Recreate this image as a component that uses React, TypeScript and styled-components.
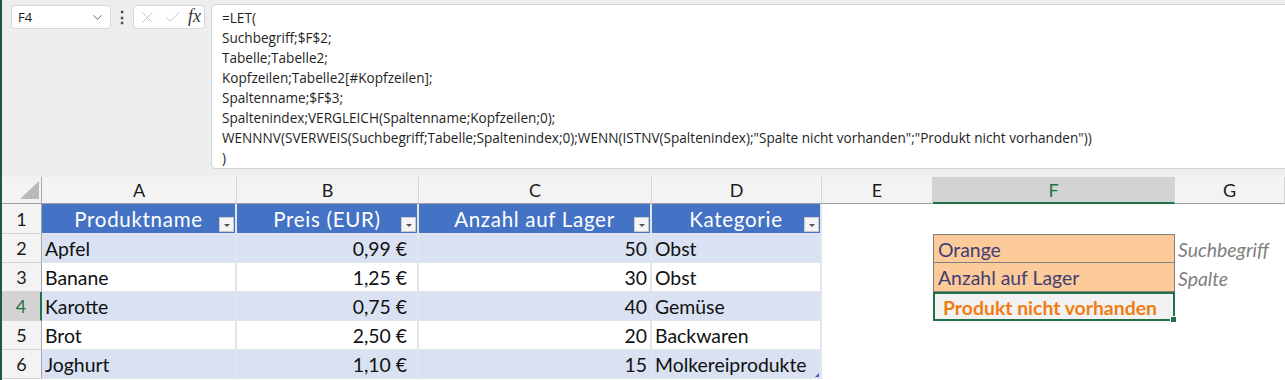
import React from "react";
import styled, { createGlobalStyle } from "styled-components";
import { ChevronDown, X, Check } from "lucide-react";

const GlobalStyle = createGlobalStyle`
  html, body {
    margin: 0;
    padding: 0;
    background: #fff;
    overflow: hidden;
  }
  body {
    font-family: "Lato", "Liberation Sans", sans-serif;
  }
`;

const formula = [
  "=LET(",
  "Suchbegriff;$F$2;",
  "Tabelle;Tabelle2;",
  "Kopfzeilen;Tabelle2[#Kopfzeilen];",
  "Spaltenname;$F$3;",
  "Spaltenindex;VERGLEICH(Spaltenname;Kopfzeilen;0);",
  'WENNNV(SVERWEIS(Suchbegriff;Tabelle;Spaltenindex;0);WENN(ISTNV(Spaltenindex);"Spalte nicht vorhanden";"Produkt nicht vorhanden"))',
  ")",
];

const columns = ["A", "B", "C", "D", "E", "F", "G"];

const products = [
  { name: "Apfel", price: "0,99 €", stock: 50, cat: "Obst" },
  { name: "Banane", price: "1,25 €", stock: 30, cat: "Obst" },
  { name: "Karotte", price: "0,75 €", stock: 40, cat: "Gemüse" },
  { name: "Brot", price: "2,50 €", stock: 20, cat: "Backwaren" },
  { name: "Joghurt", price: "1,10 €", stock: 15, cat: "Molkereiprodukte" },
];

const headers = ["Produktname", "Preis (EUR)", "Anzahl auf Lager", "Kategorie"];

export default function App() {
  return (
    <>
      <GlobalStyle />
      <Window>
        <FormulaBar>
          <NameBox>
            <span>F4</span>
            <ChevronDown size={15} strokeWidth={1.4} color="#555" />
          </NameBox>
          <Dots>⋮</Dots>
          <FnBox>
            <X size={19} strokeWidth={1} color="#b8b8b8" />
            <Check size={19} strokeWidth={1} color="#b8b8b8" />
            <Fx>fx</Fx>
          </FnBox>
          <FormulaBox>
            {formula.map((line, i) => (
              <FormulaLine key={i}>{line}</FormulaLine>
            ))}
          </FormulaBox>
        </FormulaBar>

        <Sheet>
          <Corner>
            <svg width="22" height="20" viewBox="0 0 22 20">
              <polygon points="21,1 21,19 2,19" fill="#b9b9b9" />
            </svg>
          </Corner>
          {columns.map((c) => (
            <ColHead key={c} $active={c === "F"}>
              {c}
            </ColHead>
          ))}

          <RowHead>1</RowHead>
          {headers.map((h) => (
            <TableHead key={h}>
              {h}
              <FilterButton />
            </TableHead>
          ))}
          <Blank />
          <Blank />
          <Blank />

          {products.map((p, i) => {
            const row = i + 2;
            const band = i % 2 === 0;
            const last = i === products.length - 1;
            return (
              <React.Fragment key={p.name}>
                <RowHead $active={row === 4}>{row}</RowHead>
                <DataCell $band={band}>{p.name}</DataCell>
                <DataCell $band={band} $align="right" $padRight={10}>
                  {p.price}
                </DataCell>
                <DataCell $band={band} $align="right">
                  {p.stock}
                </DataCell>
                <DataCell $band={band}>
                  {p.cat}
                  {last && <ResizeMark />}
                </DataCell>
                <Blank />
                {row === 2 && <InputCell>Orange</InputCell>}
                {row === 3 && <InputCell $joined>Anzahl auf Lager</InputCell>}
                {row === 4 && (
                  <CalcCell>
                    Produkt nicht vorhanden
                    <FillHandle />
                  </CalcCell>
                )}
                {row > 4 && <Blank />}
                {row === 2 && <NoteCell>Suchbegriff</NoteCell>}
                {row === 3 && <NoteCell>Spalte</NoteCell>}
                {row > 3 && <Blank />}
              </React.Fragment>
            );
          })}
        </Sheet>
      </Window>
    </>
  );
}

const Window = styled.div`
  width: 1285px;
  height: 380px;
  box-sizing: border-box;
  border-left: 2px solid #1d5b38;
  display: flex;
  flex-direction: column;
  overflow: hidden;
  background: #fff;
`;

const FormulaBar = styled.div`
  height: 177px;
  flex: none;
  box-sizing: border-box;
  background: #eeeeee;
  display: flex;
  align-items: flex-start;
  padding: 4px 0 0 9px;
  font-family: "Open Sans", "Noto Sans", sans-serif;
  color: #222;
`;

const NameBox = styled.div`
  margin-top: 1px;
  width: 100px;
  height: 24px;
  box-sizing: border-box;
  background: #fff;
  border: 1px solid #d7d7d7;
  border-radius: 4px;
  display: flex;
  align-items: center;
  justify-content: space-between;
  padding: 0 5px 0 6px;
  font-size: 13px;
`;

const Dots = styled.div`
  width: 22px;
  height: 26px;
  display: flex;
  align-items: center;
  justify-content: center;
  font-size: 16px;
  font-weight: 700;
  color: #444;
`;

const FnBox = styled.div`
  margin-top: 1px;
  width: 72px;
  height: 24px;
  box-sizing: border-box;
  background: #fff;
  border: 1px solid #d7d7d7;
  border-radius: 4px;
  display: flex;
  align-items: center;
  justify-content: space-between;
  padding: 0 3px 0 4px;
`;

const Fx = styled.span`
  font-family: "Liberation Serif", "DejaVu Serif", serif;
  font-style: italic;
  font-size: 18px;
  line-height: 1;
  color: #333;
  margin-bottom: 2px;
`;

const FormulaBox = styled.div`
  margin-left: 6px;
  margin-right: -12px;
  flex: 1;
  height: 165px;
  box-sizing: border-box;
  background: #fff;
  border: 1px solid #d4d4d4;
  border-radius: 4px 0 0 4px;
  padding: 3px 10px;
`;

const FormulaLine = styled.div`
  font-size: 13.6px;
  line-height: 20px;
  height: 20px;
  white-space: pre;
  color: #1f1f1f;
`;

const Sheet = styled.div`
  display: grid;
  grid-template-columns: 40px 195px 182px 233px 170px 111px 242px 110px;
  grid-template-rows: 27px 30px repeat(5, 29px);
  font-size: 19.4px;
  color: #111;
`;

const HeadBase = styled.div`
  box-sizing: border-box;
  display: flex;
  align-items: center;
  justify-content: center;
  font-size: 18px;
`;

const Corner = styled(HeadBase)`
  background: #f3f3f3;
  border-right: 1px solid #a8a8a8;
  border-bottom: 1px solid #9e9e9e;
  justify-content: flex-end;
  align-items: flex-end;
  padding: 0 1px 3px 0;
`;

const ColHead = styled(HeadBase)<{ $active?: boolean }>`
  background: ${(p) => (p.$active ? "#d3d3d3" : "#f3f3f3")};
  color: ${(p) => (p.$active ? "#217346" : "#1c1c1c")};
  border-right: 1px solid #d4d4d4;
  border-bottom: ${(p) => (p.$active ? "2px solid #217346" : "1px solid #9e9e9e")};
`;

const RowHead = styled(HeadBase)<{ $active?: boolean }>`
  background: ${(p) => (p.$active ? "#d3d3d3" : "#f3f3f3")};
  color: ${(p) => (p.$active ? "#217346" : "#1c1c1c")};
  border-right: ${(p) => (p.$active ? "2px solid #217346" : "1px solid #a8a8a8")};
  border-bottom: 1px solid #d4d4d4;
`;

const TableHead = styled.div`
  position: relative;
  box-sizing: border-box;
  background: #4472c4;
  color: #fff;
  font-size: 20.5px;
  letter-spacing: 0.7px;
  display: flex;
  align-items: center;
  justify-content: center;
  border-right: 2px solid #e2e5ec;
  border-bottom: 1px solid #e2e5ec;
  padding-top: 1px;
`;

const FilterButton = styled.span`
  position: absolute;
  right: 1px;
  bottom: 1px;
  width: 15px;
  height: 15px;
  box-sizing: border-box;
  background: #f4f4f4;
  border: 1px solid #c9c9c9;

  &::after {
    content: "";
    position: absolute;
    left: 4px;
    top: 6px;
    border-left: 3px solid transparent;
    border-right: 3px solid transparent;
    border-top: 3px solid #555;
  }
`;

const DataCell = styled.div<{ $band?: boolean; $align?: "left" | "right"; $padRight?: number }>`
  position: relative;
  box-sizing: border-box;
  background: ${(p) => (p.$band ? "#d9e1f2" : "#fff")};
  display: flex;
  align-items: center;
  justify-content: ${(p) => (p.$align === "right" ? "flex-end" : "flex-start")};
  padding: 1px ${(p) => p.$padRight ?? 3}px 0 3px;
  border-right: 2px solid #e2e5ec;
  border-bottom: 1px solid #e2e5ec;
  white-space: nowrap;
`;

const ResizeMark = styled.span`
  position: absolute;
  right: 1px;
  bottom: 1px;
  width: 0;
  height: 0;
  border-left: 4px solid transparent;
  border-bottom: 4px solid #3b64b0;
`;

const Blank = styled.div`
  background: #fff;
`;

const InputCell = styled.div<{ $joined?: boolean }>`
  box-sizing: border-box;
  background: #fdca99;
  color: #3f3f76;
  border: 1px solid #7f7f7f;
  border-top-width: ${(p) => (p.$joined ? 0 : 1)}px;
  display: flex;
  align-items: center;
  padding: 1px 4px 0 4px;
  white-space: nowrap;
`;

const CalcCell = styled.div`
  position: relative;
  box-sizing: border-box;
  background: #f2f2f2;
  color: #f07d14;
  font-weight: 700;
  border: 2px solid #217346;
  display: flex;
  align-items: center;
  padding: 1px 4px 0 8px;
  white-space: nowrap;
`;

const FillHandle = styled.span`
  position: absolute;
  right: -4px;
  bottom: -4px;
  width: 5px;
  height: 5px;
  background: #217346;
  border: 1px solid #fff;
`;

const NoteCell = styled.div`
  background: #fff;
  color: #7f7f7f;
  font-style: italic;
  display: flex;
  align-items: center;
  padding: 1px 0 0 3px;
  white-space: nowrap;
`;
